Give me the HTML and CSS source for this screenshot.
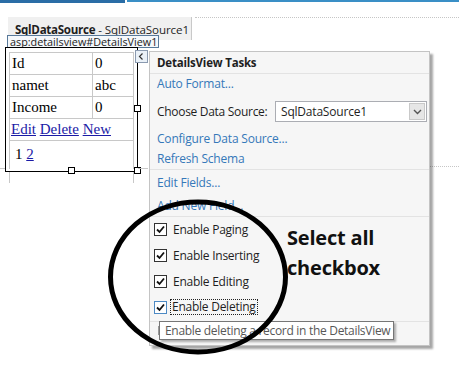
FILE: index.html
```html
<!DOCTYPE html>
<html>
<head>
<meta charset="utf-8">
<link rel="stylesheet" href="styles.css">
</head>
<body>
<div class="topbar"><div class="tb-left"></div><div class="tb-right"></div></div>
<div class="surface">
  <div class="tabrow">
    <div class="tab"><b>SqlDataSource</b><span class="tab-sub"> - SqlDataSource1</span></div>
    <div class="dots"></div>
  </div>
  <div class="ctl-label">asp:detailsview#DetailsView1</div>
  <div class="frame">
    <table class="dv">
      <tr><td class="c1">Id</td><td>0</td></tr>
      <tr><td class="c1">namet</td><td>abc</td></tr>
      <tr><td class="c1">Income</td><td>0</td></tr>
      <tr><td colspan="2" class="cmd"><a href="#">Edit</a> <a href="#">Delete</a> <a href="#">New</a></td></tr>
      <tr><td colspan="2" class="pager">1 <a href="#">2</a></td></tr>
    </table>
    <span class="handle h-rm"></span>
    <span class="handle h-bm"></span>
    <span class="handle h-br"></span>
  </div>
  <div class="guides"></div>
</div>
<div class="guide-dots"></div>

<div class="smarttag"><svg width="11" height="11" viewBox="0 0 11 11"><path d="M6.5 2.5 L3.5 5.5 L6.5 8.5" fill="none" stroke="#333" stroke-width="1.2"/></svg></div>

<div class="tasks">
  <div class="t-title">DetailsView Tasks</div>
  <div class="t-sec s1">
    <div class="t-item"><a class="lnk" href="#">Auto Format...</a></div>
    <div class="t-choose">
      <span class="t-lbl">Choose Data Source:</span>
      <div class="select"><span class="sel-text">SqlDataSource1</span><span class="sel-btn"><svg width="9" height="6" viewBox="0 0 9 6"><path d="M1 1 L4.5 4.5 L8 1" fill="none" stroke="#555" stroke-width="1.4"/></svg></span></div>
    </div>
    <div class="t-item"><a class="lnk" href="#">Configure Data Source...</a></div>
    <div class="t-item"><a class="lnk" href="#">Refresh Schema</a></div>
  </div>
  <div class="t-sec s2">
    <div class="t-item"><a class="lnk" href="#">Edit Fields...</a></div>
    <div class="t-item"><a class="lnk" href="#">Add New Field...</a></div>
  </div>
  <div class="t-sec s3">
    <div class="chk-row first"><span class="cb"><svg width="11" height="11" viewBox="0 0 11 11"><path d="M2 5.5 L4.5 8 L9 2.5" fill="none" stroke="#111" stroke-width="1.8"/></svg></span><span>Enable Paging</span></div>
    <div class="chk-row"><span class="cb"><svg width="11" height="11" viewBox="0 0 11 11"><path d="M2 5.5 L4.5 8 L9 2.5" fill="none" stroke="#111" stroke-width="1.8"/></svg></span><span>Enable Inserting</span></div>
    <div class="chk-row"><span class="cb"><svg width="11" height="11" viewBox="0 0 11 11"><path d="M2 5.5 L4.5 8 L9 2.5" fill="none" stroke="#111" stroke-width="1.8"/></svg></span><span>Enable Editing</span></div>
    <div class="chk-row"><span class="cb focus"><svg width="11" height="11" viewBox="0 0 11 11"><path d="M2 5.5 L4.5 8 L9 2.5" fill="none" stroke="#111" stroke-width="1.8"/></svg></span><span class="focus-text">Enable Deleting</span></div>
  </div>
  <div class="t-sec s4"><span class="ibar"></span></div>
</div>

<div class="tooltip">Enable deleting a record in the DetailsView</div>

<svg class="annot" width="459" height="375" viewBox="0 0 459 375"><ellipse cx="198" cy="277" rx="87.5" ry="75" fill="none" stroke="#000" stroke-width="5"/></svg>
<div class="note">Select all<br>checkbox</div>
</body>
</html>
```

FILE: styles.css
```css
html, body {
  margin: 0;
  padding: 0;
  width: 459px;
  height: 375px;
  overflow: hidden;
  background: #fff;
  font-family: "Open Sans", "Noto Sans", sans-serif;
  position: relative;
}
.topbar {
  display: flex;
  height: 3px;
}
.tb-left {
  width: 125px;
  height: 3px;
  background: #2a6da6;
}
.tb-right {
  flex: 1;
  margin-left: 2px;
  height: 2px;
  background: #3a8fc6;
}
.surface {
  margin-top: 14px;
}
.tabrow {
  display: flex;
  align-items: flex-start;
}
.tab {
  margin-left: 8px;
  width: 184px;
  height: 23px;
  box-sizing: border-box;
  background: #f0f0f0;
  border-right: 1px solid #c9c9c9;
  padding: 8px 0 0 7px;
  font-size: 11.6px;
  line-height: 10px;
  color: #1e1e1e;
  white-space: nowrap;
}
.tab b {
  font-weight: 700;
  letter-spacing: -0.3px;
}
.tab-sub { letter-spacing: -0.1px; }
.dots {
  flex: 1;
  margin-left: 3px;
  border-top: 1px dotted #c6c6c6;
}
.ctl-label {
  position: relative;
  margin: -5px 0 0 7px;
  width: 152px;
  height: 13px;
  box-sizing: border-box;
  border: 1px solid #58799a;
  background: #f5f8fb;
  font-size: 10.8px;
  line-height: 11px;
  padding-left: 2px;
  color: #222;
  white-space: nowrap;
  overflow: hidden;
}
.frame {
  position: relative;
  margin: -1px 0 0 5px;
  width: 133px;
  height: 125px;
  box-sizing: border-box;
  border: 1px solid #000;
  padding: 4px 3px 0 3px;
}
.frame::before, .frame::after {
  content: "";
  position: absolute;
  top: 120px;
  height: 1px;
  background: #c8c8c8;
}
.frame::before { left: -6px; width: 5px; }
.frame::after { left: 132px; width: 10px; }
.dv {
  border-collapse: collapse;
  width: 125px;
  font-family: "Liberation Serif", serif;
  font-size: 15px;
  color: #000;
}
.dv td {
  border: 1px solid #c8c8c8;
  height: 21px;
  padding: 0 2px;
  line-height: 17px;
}
.dv td.c1 { width: 78px; }
.dv a { text-decoration: underline; color: #1a1aa6; }
.dv td.cmd { padding: 0 1px; }
.dv td.pager {
  height: 26px;
  padding: 0 0 2px 5px;
  border-bottom: none;
}
.handle {
  position: absolute;
  width: 7px;
  height: 7px;
  box-sizing: border-box;
  background: #fff;
  border: 1px solid #000;
}
.h-rm { left: 128px; top: 57px; }
.h-bm { left: 62px; top: 119px; }
.h-br { left: 128px; top: 119px; }
.guides {
  margin-left: 9px;
  width: 125px;
  height: 11px;
  box-sizing: border-box;
  border-left: 1px solid #c8c8c8;
  border-right: 1px solid #c8c8c8;
}
.guide-dots {
  position: absolute;
  left: 428px;
  top: 166px;
  width: 31px;
  border-top: 1px dotted #c6c6c6;
}
.smarttag {
  position: absolute;
  left: 135px;
  top: 50px;
  width: 13px;
  height: 13px;
  box-sizing: border-box;
  border: 1px solid #8a9ab0;
  background: #eaf1f8;
  display: flex;
  align-items: center;
  justify-content: center;
}
.smarttag svg { display: block; }
.tasks {
  position: absolute;
  left: 149px;
  top: 51px;
  width: 281px;
  height: 295px;
  box-sizing: border-box;
  background: #f6f6f6;
  border: 1px solid #c4c4c4;
  box-shadow: 3px 3px 2px rgba(0,0,0,0.35);
  font-size: 12px;
  color: #1e1e1e;
  display: flex;
  flex-direction: column;
}
.t-title {
  height: 21px;
  line-height: 21px;
  padding-left: 7px;
  font-weight: 700;
  font-size: 11.5px;
  border-bottom: 1px solid #e3e3e3;
  letter-spacing: -0.2px;
}
.t-sec {
  border-bottom: 1px solid #e3e3e3;
  display: flex;
  flex-direction: column;
}
.t-item {
  height: 20px;
  line-height: 20px;
  padding-left: 7px;
}
.lnk {
  color: #3578b9;
  text-decoration: none;
  letter-spacing: -0.2px;
}
.t-choose {
  height: 35px;
  display: flex;
  align-items: center;
  padding-left: 7px;
}
.t-lbl {
  width: 118px;
  letter-spacing: -0.3px;
}
.select {
  width: 152px;
  height: 21px;
  box-sizing: border-box;
  border: 1px solid #abadb3;
  background: #fff;
  display: flex;
  align-items: center;
  justify-content: space-between;
  padding: 0 1px 0 5px;
}
.sel-text { letter-spacing: -0.2px; }
.sel-btn {
  width: 16px;
  height: 17px;
  box-sizing: border-box;
  background: #e6e6e6;
  border: 1px solid #c9c9c9;
  display: flex;
  align-items: center;
  justify-content: center;
}
.sel-btn svg { display: block; }
.s2 {
  padding-top: 3px;
  gap: 3px;
}
.s3 {
  padding-bottom: 1px;
}
.chk-row {
  height: 26px;
  display: flex;
  align-items: center;
  padding-left: 4px;
  gap: 6px;
  letter-spacing: -0.25px;
}
.chk-row.first { height: 25px; }
.cb {
  width: 13px;
  height: 13px;
  box-sizing: border-box;
  border: 1px solid #333;
  background: #fff;
  display: flex;
  align-items: center;
  justify-content: center;
}
.cb svg { display: block; }
.cb.focus { border-color: #4d8ac4; }
.focus-text {
  outline: 1px dotted #222;
  padding: 0 1px;
  line-height: 14px;
  margin-left: -2px;
}
.s4 {
  flex: 1;
  border-bottom: none;
  position: relative;
}
.ibar {
  position: absolute;
  left: 8px;
  top: 4px;
  width: 3px;
  height: 9px;
  background: #9a9a9a;
}
.tooltip {
  position: absolute;
  left: 159px;
  top: 321px;
  width: 235px;
  height: 19px;
  box-sizing: border-box;
  background: #fff;
  border: 1px solid #767676;
  box-shadow: 2px 2px 2px rgba(0,0,0,0.3);
  font-size: 12px;
  line-height: 17px;
  padding-left: 5px;
  color: #575757;
  white-space: nowrap;
  letter-spacing: -0.3px;
}
.annot {
  position: absolute;
  left: 0;
  top: 0;
  pointer-events: none;
}
.note {
  position: absolute;
  left: 287px;
  top: 223px;
  font-family: "Open Sans", sans-serif;
  font-weight: 700;
  font-size: 20px;
  line-height: 30px;
  color: #111;
  letter-spacing: -0.2px;
}
```
